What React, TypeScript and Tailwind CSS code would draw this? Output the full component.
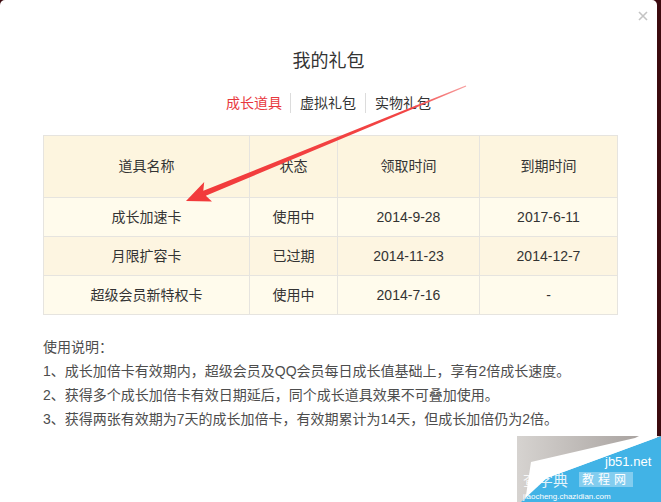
import React from "react";

const font = { fontFamily: '"Liberation Sans", "Noto Sans CJK SC", Arial, sans-serif' };

const rows = [
  { name: "成长加速卡", status: "使用中", get: "2014-9-28", exp: "2017-6-11", bg: "bg-[#fffbec]" },
  { name: "月限扩容卡", status: "已过期", get: "2014-11-23", exp: "2014-12-7", bg: "bg-[#fdf5e1]" },
  { name: "超级会员新特权卡", status: "使用中", get: "2014-7-16", exp: "-", bg: "bg-[#fffbec]" },
];

export default function App() {
  return (
    <div className="w-[661px] h-[502px] bg-[#3c0a0f] overflow-hidden" style={font}>
      <div className="relative w-[657px] h-[502px] bg-white rounded-t-[5px]">
        {/* close */}
        <svg className="absolute left-[638px] top-[11px]" width="10" height="10" viewBox="0 0 10 10">
          <path d="M1 1 L9 9 M9 1 L1 9" stroke="#c4c4c4" strokeWidth="1.6" />
        </svg>

        <div className="pt-[49px] text-center text-[18px] leading-[24px] text-[#333]">我的礼包</div>

        <div className="mt-[20px] flex justify-center text-[14px] leading-[20px]">
          <span className="pr-[8px] text-[#e8383d]">成长道具</span>
          <span className="px-[9px] border-l border-[#dcdcdc] text-[#333]">虚拟礼包</span>
          <span className="pl-[9px] border-l border-[#dcdcdc] text-[#333]">实物礼包</span>
        </div>

        <table className="mt-[22px] ml-[43px] w-[575px] border-collapse text-[14px] text-[#333] text-center">
          <thead>
            <tr className="h-[62px] bg-[#fdf5df]">
              <th className="font-normal border border-[#e6e4df] w-[206px]">道具名称</th>
              <th className="font-normal border border-[#e6e4df] w-[88px]">状态</th>
              <th className="font-normal border border-[#e6e4df] w-[142px]">领取时间</th>
              <th className="font-normal border border-[#e6e4df]">到期时间</th>
            </tr>
          </thead>
          <tbody>
            {rows.map((r) => (
              <tr key={r.name} className={`h-[39px] ${r.bg}`}>
                <td className="border border-[#e6e4df]">{r.name}</td>
                <td className="border border-[#e6e4df]">{r.status}</td>
                <td className="border border-[#e6e4df]">{r.get}</td>
                <td className="border border-[#e6e4df]">{r.exp}</td>
              </tr>
            ))}
          </tbody>
        </table>

        <div className="mt-[20px] ml-[43px] text-[14px] leading-[24px] text-[#4d4d4d]">
          <p>使用说明：</p>
          <p>1、成长加倍卡有效期内，超级会员及QQ会员每日成长值基础上，享有2倍成长速度。</p>
          <p>2、获得多个成长加倍卡有效日期延后，同个成长道具效果不可叠加使用。</p>
          <p>3、获得两张有效期为7天的成长加倍卡，有效期累计为14天，但成长加倍仍为2倍。</p>
        </div>

        {/* red annotation arrow */}
        <svg className="absolute left-0 top-0 pointer-events-none" width="657" height="502" viewBox="0 0 657 502">
          <defs>
            <linearGradient id="ag" x1="186" y1="201" x2="466" y2="86" gradientUnits="userSpaceOnUse">
              <stop offset="0" stopColor="#f23a3a" />
              <stop offset="0.8" stopColor="#f24545" />
              <stop offset="1" stopColor="#f7a0a0" />
            </linearGradient>
          </defs>
          <polygon
            points="186,201 212,201.5 205.8,195.8 466.3,86.6 465.7,85.4 203.3,190.8 204.2,182"
            fill="url(#ag)"
          />
        </svg>
      </div>

      {/* watermark */}
      <svg className="absolute left-[517px] top-[436px]" width="144" height="66" viewBox="0 0 144 66">
        <defs>
          <linearGradient id="wg" x1="0" y1="0" x2="1" y2="0">
            <stop offset="0" stopColor="#d6d3d0" />
            <stop offset="1" stopColor="#a9a3a0" />
          </linearGradient>
        </defs>
        <polygon points="0,0 122,0 118,2 14,26 8,66 0,66" fill="url(#wg)" />
        <polygon points="144,0 144,66 4,66 30,42" fill="#41b3e6" />
        <polygon points="140,0 144,0 30,42 20,40" fill="#ffffff" opacity="0.9" />
        <text x="88" y="30" fontSize="13" fill="#ffffff" fontFamily="Liberation Sans, sans-serif">jb51.net</text>
        <rect x="62" y="36" width="54" height="15" fill="#ffffff" opacity="0.35" />
        <text x="65" y="48" fontSize="12" fill="#ffffff" fontFamily="Noto Sans CJK SC, sans-serif" letterSpacing="4">教程网</text>
        <text x="6" y="50" fontSize="15" fill="#ffffff" opacity="0.85" fontFamily="Noto Sans CJK SC, sans-serif">查字典</text>
        <text x="6" y="63" fontSize="8" fill="#ffffff" fontFamily="Liberation Sans, sans-serif">jiaocheng.chazidian.com</text>
      </svg>
    </div>
  );
}
